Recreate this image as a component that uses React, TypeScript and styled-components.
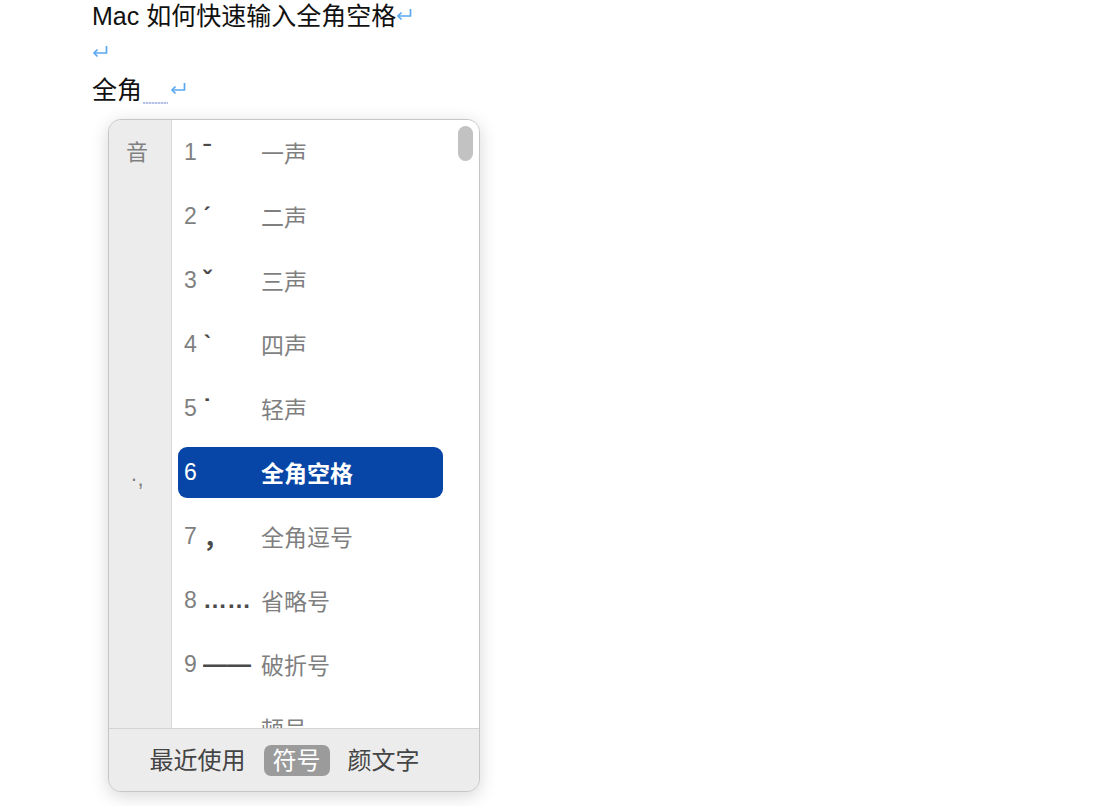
import styled, { createGlobalStyle } from "styled-components";

const GlobalStyle = createGlobalStyle`
  html, body {
    margin: 0;
    padding: 0;
    background: #ffffff;
  }
  body {
    font-family: "Liberation Sans", "Noto Sans CJK SC", sans-serif;
  }
`;

const rows = [
  { num: "1", sym: "ˉ", label: "一声" },
  { num: "2", sym: "ˊ", label: "二声" },
  { num: "3", sym: "ˇ", label: "三声" },
  { num: "4", sym: "ˋ", label: "四声" },
  { num: "5", sym: "˙", label: "轻声" },
  { num: "6", sym: "", label: "全角空格", selected: true },
  { num: "7", sym: "，", label: "全角逗号" },
  { num: "8", sym: "……", label: "省略号" },
  { num: "9", sym: "——", label: "破折号" },
  { num: "", sym: "", label: "顿号" },
];

function ReturnMark() {
  return (
    <ReturnIcon width="16" height="14" viewBox="0 0 16 14">
      <path d="M14.5 1 V8 H2" fill="none" stroke="#5aa9f0" strokeWidth="1.7" />
      <path d="M5.5 4.5 L2 8 L5.5 11.5" fill="none" stroke="#5aa9f0" strokeWidth="1.7" />
    </ReturnIcon>
  );
}

function App() {
  return (
    <Page>
      <GlobalStyle />
      <Document>
        <Line>Mac 如何快速输入全角空格<ReturnMark /></Line>
        <Line><ReturnMark /></Line>
        <Line>全角<Marked /><ReturnMark /></Line>
      </Document>
      <Popup>
        <Body>
          <Side>
            <SideItem>音</SideItem>
            <SideItem $top={298}>·,</SideItem>
          </Side>
          <List>
            {rows.map((row, index) => (
              <Row key={index}>
                <Cell $selected={row.selected}>
                  <Num>{row.num}</Num>
                  <Sym $wide={row.sym.length > 1}>{row.sym}</Sym>
                  <Label $selected={row.selected}>{row.label}</Label>
                </Cell>
              </Row>
            ))}
            <Scroll />
          </List>
        </Body>
        <Footer>
          <Tab>最近使用</Tab>
          <Tab $active>符号</Tab>
          <Tab>颜文字</Tab>
        </Footer>
      </Popup>
    </Page>
  );
}
export default App;

const Page = styled.div`
  width: 1096px;
  height: 806px;
  overflow: hidden;
  padding-left: 92px;
  box-sizing: border-box;
`;

const Document = styled.div`
  margin-top: -2px;
  font-size: 25px;
  color: #111111;
`;

const Line = styled.div`
  height: 37px;
  line-height: 37px;
  display: flex;
  align-items: center;
  white-space: nowrap;
`;

const ReturnIcon = styled.svg`
  margin-top: -4px;
  flex: none;
`;

const Marked = styled.span`
  display: inline-block;
  width: 25px;
  height: 2px;
  margin: 25px 2px 0 1px;
  background: repeating-linear-gradient(90deg, #b4c2ea 0 2px, #dde3f5 2px 3px);
`;

const Popup = styled.div`
  margin-top: 10px;
  margin-left: 16px;
  width: 372px;
  height: 673px;
  box-sizing: border-box;
  border: 1px solid #c6c6c6;
  border-radius: 13px;
  overflow: hidden;
  background: #ececec;
  box-shadow: 0 4px 18px rgba(0, 0, 0, 0.16);
  display: flex;
  flex-direction: column;
  font-family: "Liberation Sans", "Noto Sans CJK SC", sans-serif;
`;

const Body = styled.div`
  display: flex;
  height: 608px;
  border-bottom: 1px solid #d4d4d4;
`;

const Side = styled.div`
  width: 63px;
  flex: none;
  background: #ececec;
  border-right: 1px solid #d9d9d9;
  display: flex;
  flex-direction: column;
  align-items: center;
  padding-right: 6px;
  box-sizing: border-box;
`;

const SideItem = styled.div<{ $top?: number }>`
  margin-top: ${(p) => p.$top ?? 19}px;
  font-size: 22px;
  line-height: 28px;
  color: #808080;
`;

const List = styled.div`
  position: relative;
  flex: 1;
  background: #ffffff;
  overflow: hidden;
`;

const Row = styled.div`
  height: 64px;
  flex: none;
  display: flex;
  align-items: center;
  padding-left: 6px;
`;

const Cell = styled.div<{ $selected?: boolean }>`
  width: 265px;
  height: 51px;
  box-sizing: border-box;
  padding-left: 6px;
  border-radius: 9px;
  display: flex;
  align-items: center;
  background: ${(p) => (p.$selected ? "#0746a6" : "transparent")};
  color: ${(p) => (p.$selected ? "#ffffff" : "#7f7f7f")};
  font-size: 23px;
`;

const Num = styled.span`
  width: 19px;
  flex: none;
`;

const Sym = styled.span<{ $wide?: boolean }>`
  width: 58px;
  flex: none;
  color: #4a4a4a;
  font-weight: 700;
  font-size: ${(p) => (p.$wide ? "24px" : "25px")};
  letter-spacing: ${(p) => (p.$wide ? "0" : "0")};
  white-space: nowrap;
  overflow: hidden;
`;

const Label = styled.span<{ $selected?: boolean }>`
  font-weight: ${(p) => (p.$selected ? 700 : 400)};
`;

const Scroll = styled.div`
  position: absolute;
  top: 6px;
  right: 6px;
  width: 15px;
  height: 35px;
  border-radius: 8px;
  background: #c2c2c2;
`;

const Footer = styled.div`
  flex: 1;
  display: flex;
  align-items: center;
  justify-content: center;
  gap: 9px;
  padding-right: 19px;
  background: #ececec;
`;

const Tab = styled.div<{ $active?: boolean }>`
  font-size: 24px;
  line-height: 31px;
  padding: 0 9px;
  border-radius: 7px;
  color: ${(p) => (p.$active ? "#ffffff" : "#444444")};
  background: ${(p) => (p.$active ? "#9b9b9b" : "transparent")};
`;
